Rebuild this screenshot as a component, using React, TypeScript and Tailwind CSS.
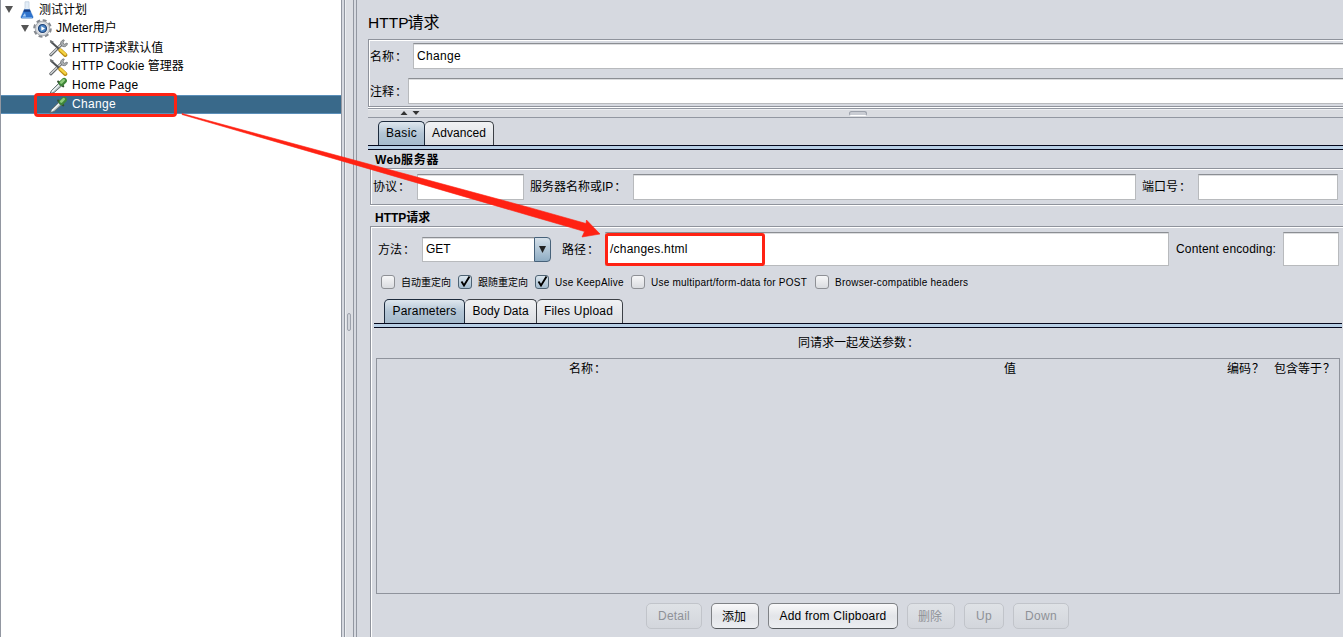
import type { ReactNode } from 'react';

function Flask() {
  return (
    <svg width="14" height="18" viewBox="0 0 14 18" className="shrink-0">
      <path d="M5 .8h4v6l4.200 9q.4 1.700-1.200 1.700H2Q.4 17.500.8 15.800L5 6.800z" fill="#e3edf7" stroke="#c3d0de" strokeWidth=".8" />
      <path d="M4.200 8.500h5.600l3.300 7.300q.3 1.500-1 1.500H2q-1.300 0-1-1.500z" fill="#2f73cd" />
      <path d="M4.300 8.500h5.400l1 2.300H3.300z" fill="#173f86" />
      <path d="M2.500 15.500l2.500-3.500 1 3.500z" fill="#a5cdf7" />
      <path d="M2 16.500h10" stroke="#6ea6e8" strokeWidth="1" />
    </svg>
  );
}

function Gear() {
  return (
    <svg width="19" height="19" viewBox="0 0 19 19" className="shrink-0">
      <circle cx="9.500" cy="9.500" r="7.900" fill="none" stroke="#85898f" strokeWidth="2.800" strokeDasharray="3.700 2.505" />
      <circle cx="9.500" cy="9.500" r="7.300" fill="#d3d6da" stroke="#999da3" strokeWidth=".8" />
      <circle cx="9.500" cy="9.500" r="5.400" fill="#eceef0" />
      <circle cx="9.500" cy="9.500" r="4" fill="#4a84c4" stroke="#1f4377" strokeWidth="1.200" />
      <path d="M8.300 7.200l3.700 2.300-3.700 2.300z" fill="#fff" />
    </svg>
  );
}

function Tools() {
  return (
    <svg width="19" height="18" viewBox="0 0 19 18" className="shrink-0">
      <path d="M1.800 15.800L13 5" stroke="#5f6366" strokeWidth="3" strokeLinecap="round" />
      <path d="M1.800 15.500L13 4.800" stroke="#d3d6d8" strokeWidth="1.400" strokeLinecap="round" />
      <path d="M11.800 5.800q-1-3.600 2.700-5l.8.4-1.300 2.600 1.500 1.400 2.500-1.200.5.600q-.8 3.800-4.800 2.900z" fill="#a9adb0" stroke="#66696c" strokeWidth=".7" />
      <path d="M1.500 2.300L10 10" stroke="#4e5255" strokeWidth="2" />
      <path d="M.6.8l4.200 2-2.200 2z" fill="#6b6f72" />
      <path d="M11.300 11.300l5 4.700" stroke="#b98a12" strokeWidth="4" strokeLinecap="round" />
      <path d="M11.300 10.800l5 4.600" stroke="#f5d443" strokeWidth="2.300" strokeLinecap="round" />
    </svg>
  );
}

function Dropper() {
  return (
    <svg width="19" height="18" viewBox="0 0 19 18" className="shrink-0">
      <path d="M.8 17l1.500-3.200L10 6l2.800 2.700-7.600 6.800z" fill="#b3c0c2" stroke="#5c6668" strokeWidth=".9" />
      <path d="M3 14.700l7.200-6.800" stroke="#f4fafa" strokeWidth="1.300" />
      <path d="M9.200 4.600l5 4.700" stroke="#33502f" strokeWidth="2.200" strokeLinecap="round" />
      <path d="M12.500 6.200l2.600-2.500" stroke="#3f8638" strokeWidth="5.600" strokeLinecap="round" />
      <path d="M12.300 5.500l2.400-2.400" stroke="#8ccb7c" strokeWidth="2.600" strokeLinecap="round" />
    </svg>
  );
}

function Toggle() {
  return (
    <svg width="8" height="7" viewBox="0 0 8 7" className="shrink-0">
      <path d="M0 0h8L4 7z" fill="#555" />
    </svg>
  );
}

function Mark({ children }: { children: string }) {
  return <span className="ml-px">{children}</span>;
}

function Field({ className = '', children }: { className?: string; children?: ReactNode }) {
  return (
    <div
      className={`flex shrink-0 items-center border border-[#b8babd] border-t-[#8b8e93] bg-white pl-[3px] shadow-[inset_0_1px_0_#dcdddf] ${className}`}
    >
      {children}
    </div>
  );
}

function Tab({ active = false, className = '', children }: { active?: boolean; className?: string; children: ReactNode }) {
  return (
    <div
      className={`flex h-6 shrink-0 items-center justify-center rounded-t-[5px] border border-b-0 pb-0.5 ${
        active
          ? 'border-[#1d2b3d] bg-linear-to-b from-[#dfe7ee] via-[#b3c5d5] to-[#a5bacc]'
          : 'border-[#3c4046] border-l-0 bg-linear-to-b from-[#f1f2f4] to-[#dadde2]'
      } ${className}`}
    >
      {children}
    </div>
  );
}

function Check({ on = false }: { on?: boolean }) {
  return (
    <div
      className={`h-[14px] w-[14px] shrink-0 rounded-[3px] border ${
        on ? 'border-[#4d6273] bg-linear-to-b from-[#dce6ee] to-[#a4bccf]' : 'border-[#8e9095] bg-linear-to-b from-[#f7f7f8] to-[#dadce0]'
      }`}
    >
      {on && (
        <svg width="12" height="12" viewBox="0 0 12 12" className="overflow-visible">
          <path d="M2.500 5.500l2.500 4L10.500.500" fill="none" stroke="#000" strokeWidth="1.900" />
        </svg>
      )}
    </div>
  );
}

function Button({ disabled = false, className = '', children }: { disabled?: boolean; className?: string; children: ReactNode }) {
  return (
    <button
      disabled={disabled}
      className={`flex h-[26px] shrink-0 items-center justify-center rounded-[5px] border ${
        disabled
          ? 'border-[#c1c4ca] bg-linear-to-b from-[#dfe2e6] to-[#d3d6dc] text-[#8e9197]'
          : 'border-[#7f8286] border-b-[#54585c] bg-linear-to-b from-[#f9f9fa] via-[#e3e5e9] to-[#eceef1] text-black'
      } ${className}`}
    >
      {children}
    </button>
  );
}

const etched = 'border-[#8f939c] shadow-[inset_1px_1px_0_#fff,0_1px_0_#fff]';

export default function App() {
  return (
    <div className="relative flex h-[637px] w-[1343px] overflow-hidden whitespace-nowrap bg-[#d6d9e0] font-['Liberation_Sans','Noto_Sans_CJK_SC',sans-serif] text-xs leading-none text-black">
      {/* Test plan tree */}
      <aside className="w-[342px] shrink-0 border-x border-[#9297a1] bg-white">
        <div className="flex h-[19px] items-center pl-1">
          <Toggle />
          <div className="ml-[7px] mr-[5px]"><Flask /></div>
          测试计划
        </div>
        <div className="flex h-[19px] items-center pl-5">
          <Toggle />
          <div className="ml-1 mr-1"><Gear /></div>
          <span className="pb-px">JMeter用户</span>
        </div>
        <div className="flex h-[19px] items-center gap-1 pl-12">
          <Tools />
          <span>HTTP请求默认值</span>
        </div>
        <div className="flex h-[19px] items-center gap-1 pl-12">
          <Tools />
          <span className="pb-px"><span className="tracking-[0.05px]">HTTP Cookie </span>管理器</span>
        </div>
        <div className="flex h-[19px] items-center gap-1 pl-12 tracking-[0.35px]">
          <Dropper />
          <span className="pb-0.5">Home Page</span>
        </div>
        <div className="flex h-[19px] items-center gap-1 border-y border-[#5b8fb9] bg-[#39698a] pl-12 tracking-[0.35px] text-white">
          <Dropper />
          <span className="pb-0.5">Change</span>
        </div>
      </aside>

      {/* Vertical splitter */}
      <div className="flex w-[15px] shrink-0 pl-[2px]">
        <div className="flex w-[10px] items-center justify-center border-x border-[#9297a1] bg-[#dcdee3] shadow-[inset_1px_0_0_#eceef1]">
          <div className="mt-[7px] h-[18px] w-1 rounded-sm border border-[#9da2ac] bg-[#d3d6dc]" />
        </div>
        <div className="ml-[2px] w-px bg-[#9297a1]" />
      </div>

      <main className="w-[986px] shrink-0">
        <div className="flex h-[39px] items-center pl-[11px] pt-[6px]">
          <span className="text-[15.500px]">HTTP</span>
          <span className="-ml-px text-base leading-none">请求</span>
        </div>

        <section className={`ml-[11px] flex h-[68px] flex-col border border-r-0 pt-[3px] ${etched}`}>
          <div className="flex h-[26px] items-center">
            <span className="w-[44px] shrink-0 pl-px pt-px">名称<Mark>：</Mark></span>
            <Field className="h-[26px] w-[940px]"><span className="tracking-[0.35px]">Change</span></Field>
          </div>
          <div className="mt-[9px] flex h-[26px] items-center">
            <span className="w-[39px] shrink-0 pl-px pt-px">注释<Mark>：</Mark></span>
            <Field className="h-[26px] w-[945px]" />
          </div>
        </section>

        {/* Horizontal splitter */}
        <div className="ml-[11px] mt-px flex h-[10px] items-center border-y border-[#9297a1] bg-[#dadce1] pl-8 shadow-[inset_0_1px_0_#eceef1]">
          <svg width="20" height="4" viewBox="0 0 20 4">
            <path d="M.5 4h7L4 0zM12.500 0h7L16 4z" fill="#333" />
          </svg>
          <div className="ml-[429px] h-[5px] w-[18px] rounded-sm border border-[#9da2ac] border-b-white bg-[#c9ccd3]" />
        </div>

        <div className="mt-[3px] flex h-6 pl-[21px]">
          <Tab active className="w-[47px] tracking-[0.35px]">Basic</Tab>
          <Tab className="w-[69px] tracking-[0.05px]">Advanced</Tab>
        </div>
        <div className="ml-[11px] h-[5px] border-y border-[#05081c] bg-[#b8cfe5]" />

        <h2 className="flex h-[18px] items-center pl-[18px] pt-0.5 font-bold"><span className="tracking-[0.3px]">Web</span><span className="tracking-[0.7px]">服务器</span></h2>
        <section className={`ml-[13px] flex h-[37px] items-center border border-r-0 ${etched}`}>
          <span className="w-[46px] shrink-0 pl-[2px] pt-px">协议<Mark>：</Mark></span>
          <Field className="h-[26px] w-[107px]" />
          <span className="w-[109px] shrink-0 pl-[6px] pt-px">服务器名称或IP<Mark>：</Mark></span>
          <Field className="h-[26px] w-[503px]" />
          <span className="w-[62px] shrink-0 pl-[6px] pt-px">端口号<Mark>：</Mark></span>
          <Field className="h-[26px] w-[140px]" />
        </section>

        <h2 className="flex h-[21px] items-center pl-[18px] pt-[4px] font-bold">HTTP请求</h2>
        <section className="ml-[13px] h-[420px] border-l border-t border-[#8f939c] shadow-[inset_1px_1px_0_#fff]">
          <div className="flex h-[34px] translate-y-[5px] items-center">
            <span className="w-[51px] shrink-0 pl-[7px] pt-px">方法<Mark>：</Mark></span>
            <div className="flex h-[25px] w-[129px] shrink-0">
              <Field className="w-[112px] border-r-0">GET</Field>
              <div className="flex w-[17px] items-center justify-center rounded-r-[4px] border border-[#47627a] bg-linear-to-b from-[#d5e0e9] to-[#8fadc4]">
                <svg width="7" height="7" viewBox="0 0 7 7">
                  <path d="M0 0h7L3.500 7z" fill="#222" />
                </svg>
              </div>
            </div>
            <span className="w-[54px] shrink-0 pl-[11px] pt-px">路径<Mark>：</Mark></span>
            <Field className="h-[34px] w-[564px] pl-[4px]">
              <span className="tracking-[0.22px]">/changes.html</span>
            </Field>
            <span className="w-[114px] shrink-0 pl-[7px] tracking-[0.15px]">Content encoding:</span>
            <Field className="h-[34px] w-[56px]" />
          </div>

          <div className="flex h-[14px] translate-y-[14px] items-center pl-[10px] text-[10px]">
            <Check />
            <span className="w-[63px] pl-[6px] pt-0.5">自动重定向</span>
            <Check on />
            <span className="w-[63px] pl-[6px] pt-0.5">跟随重定向</span>
            <Check on />
            <span className="w-[82px] pl-[6px] pt-0.5 tracking-[0.25px]">Use KeepAlive</span>
            <Check />
            <span className="w-[170px] pl-[6px] pt-0.5 tracking-[0.22px]">Use multipart/form-data for POST</span>
            <Check />
            <span className="pl-[6px] pt-0.5 tracking-[0.23px]">Browser-compatible headers</span>
          </div>

          <div className="mt-6 flex h-6 pl-[13px]">
            <Tab active className="w-[81px] tracking-[0.2px]">Parameters</Tab>
            <Tab className="w-[72px] tracking-[0.02px]">Body Data</Tab>
            <Tab className="w-[86px] pr-0.5 tracking-[0.2px]">Files Upload</Tab>
          </div>
          <div className="ml-[3px] h-[5px] w-[968px] border-y border-[#05081c] bg-[#b8cfe5]" />

          <div className="flex h-[30px] pl-[427px] items-center">同请求一起发送参数<Mark>：</Mark></div>
          <div className="ml-[5px] flex h-[236px] w-[964px] items-start border border-[#8f939c] pt-1">
            <span className="w-[435px] pl-[192px]">名称<Mark>：</Mark></span>
            <span className="w-[407px] pl-[192px]">值</span>
            <span className="w-[46px] pl-[8px]">编码<Mark>？</Mark></span>
            <span className="pl-[9px]">包含等于<Mark>？</Mark></span>
          </div>

          <div className="mt-[9px] flex gap-[9px] pl-[275px]">
            <Button disabled className="w-[56px] tracking-[0.2px]">Detail</Button>
            <Button className="w-[48px] pr-0.5 pt-px">添加</Button>
            <Button className="w-[130px] tracking-[0.2px]">Add from Clipboard</Button>
            <Button disabled className="w-[48px] pr-0.5 pt-px">删除</Button>
            <Button disabled className="w-[40px] tracking-[0.3px]">Up</Button>
            <Button disabled className="w-[56px] tracking-[0.3px]">Down</Button>
          </div>
        </section>
      </main>

      {/* Red annotations */}
      <div className="absolute left-[34px] top-[93px] h-6 w-[143px] rounded-[4px] border-3 border-[#ff2213]" />
      <div className="absolute left-[605px] top-[233px] h-[33px] w-[160px] rounded-[3px] border-3 border-[#ff2213]" />
      <svg width="1343" height="637" viewBox="0 0 1343 637" className="pointer-events-none absolute left-0 top-0">
        <path d="M182 113.500L530 207.700 586 223.500 586.500 220 600 234 582 237 584.500 231.500 530 215.700 182 114.500z" fill="#ff2213" stroke="#ff2213" strokeWidth=".6" />
      </svg>
    </div>
  );
}
